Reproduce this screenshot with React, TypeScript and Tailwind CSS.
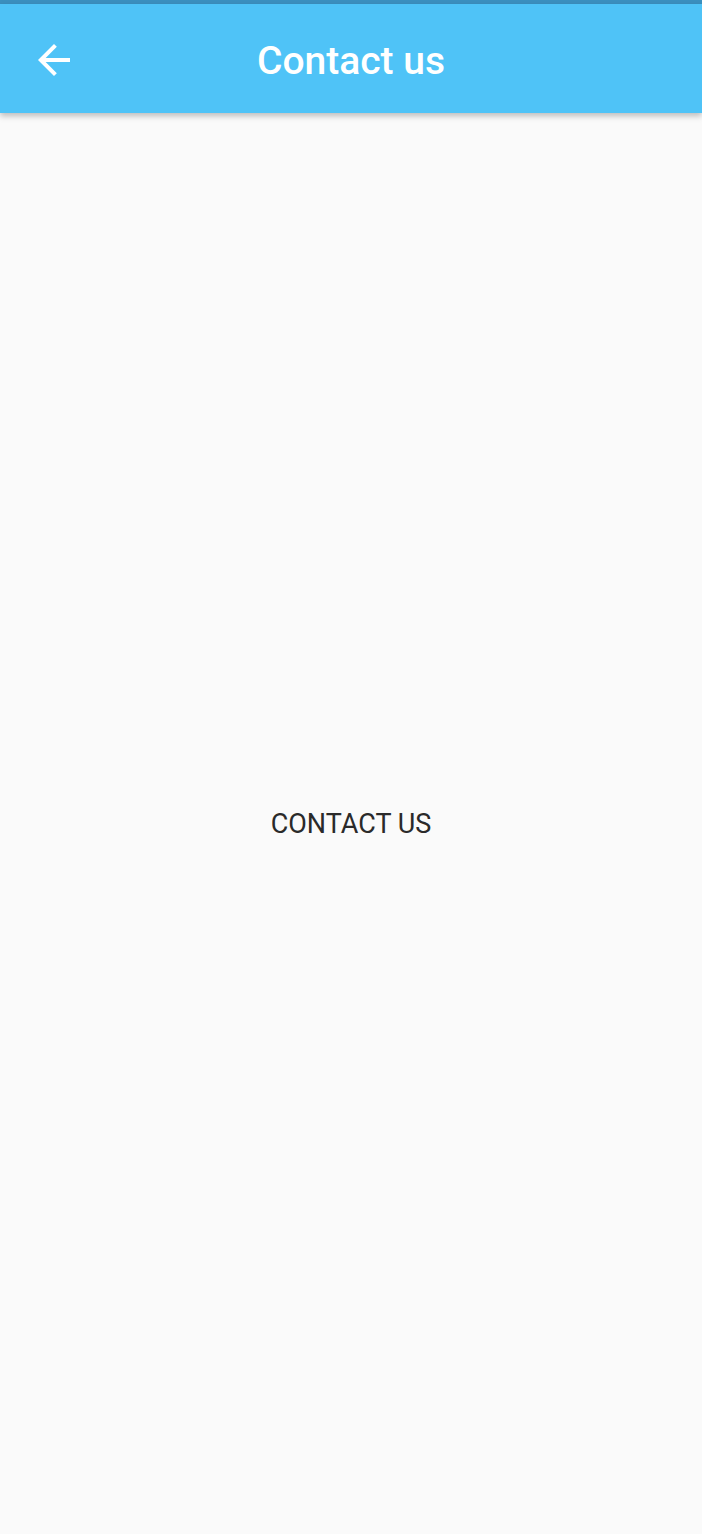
export default function App() {
  return (
    <div
      className="flex flex-col w-full h-screen bg-[#fafafa]"
      style={{ fontFamily: "Roboto, 'Liberation Sans', sans-serif" }}
    >
      <div className="h-[4px] bg-[#3b90bf]" />
      <header className="relative z-10 flex items-center h-[109px] bg-[#4fc3f7] shadow-[0_3px_6px_rgba(0,0,0,0.25)]">
        <button className="flex items-center justify-center w-[60px] h-[60px] ml-[24px] mt-[2px] text-white">
          <svg width="48" height="48" viewBox="0 0 24 24" fill="currentColor">
            <path d="M20 11H7.83l5.59-5.59L12 4l-8 8 8 8 1.41-1.41L7.83 13H20v-2z" />
          </svg>
        </button>
        <div className="flex-1 flex justify-center pr-[84px] mt-[5px]">
          <span className="text-white text-[39px] font-medium">Contact us</span>
        </div>
      </header>
      <main className="flex-1 flex items-center justify-center pt-[2px]">
        <span className="text-[27px] text-[#2a2a2a]">CONTACT US</span>
      </main>
    </div>
  );
}
